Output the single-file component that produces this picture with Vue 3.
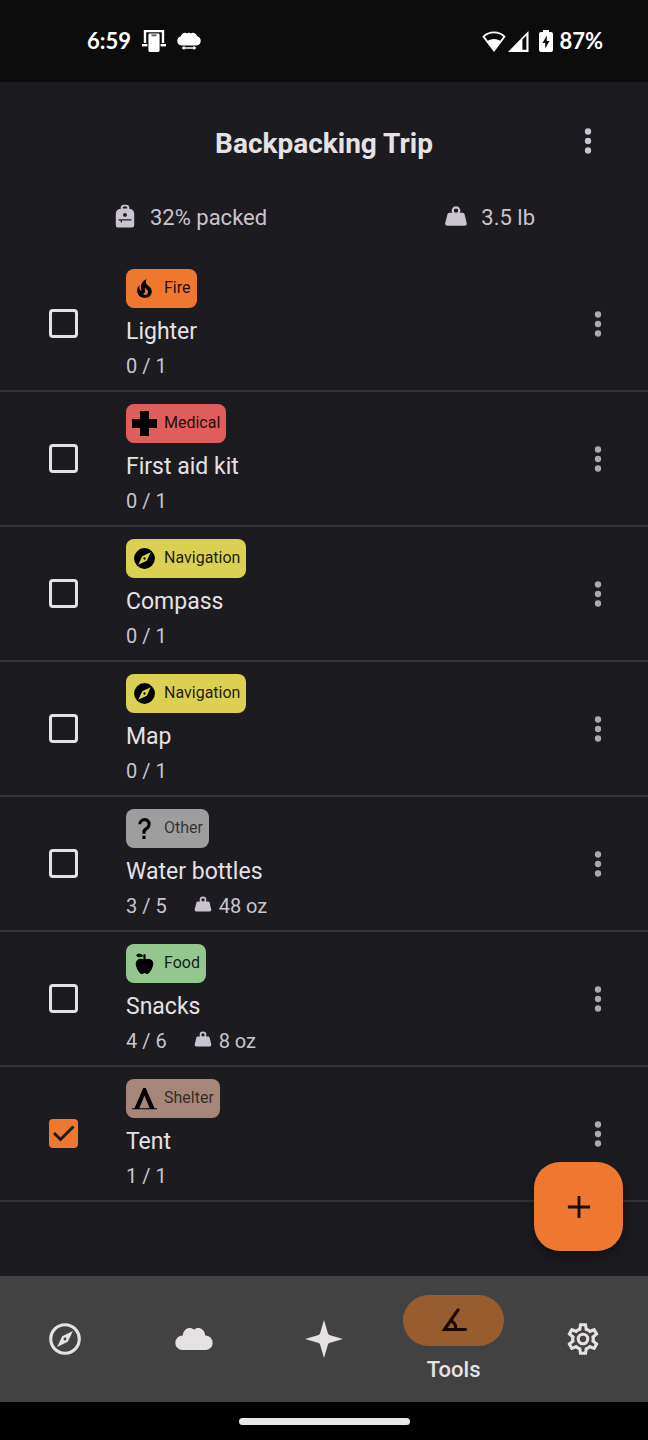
<script setup>
import { ref } from 'vue'

const paths = {
  fire: 'M17.66 11.2C17.43 10.9 17.15 10.64 16.89 10.38C16.22 9.78 15.46 9.35 14.82 8.72C13.33 7.26 13 4.85 13.95 3C13 3.23 12.17 3.75 11.46 4.32C8.87 6.4 7.85 10.07 9.07 13.22C9.11 13.32 9.15 13.42 9.15 13.55C9.15 13.77 9 13.97 8.8 14.05C8.57 14.15 8.33 14.09 8.14 13.93C8.08 13.88 8.04 13.83 8 13.76C6.87 12.33 6.69 10.28 7.45 8.64C5.78 10 4.87 12.3 5 14.47C5.06 14.97 5.12 15.47 5.29 15.97C5.43 16.57 5.7 17.17 6 17.7C7.08 19.43 8.95 20.67 10.96 20.92C13.1 21.19 15.39 20.8 17.03 19.32C18.86 17.66 19.5 15 18.56 12.72L18.43 12.46C18.22 12 17.66 11.2 17.66 11.2M14.5 17.5C14.22 17.74 13.76 18 13.4 18.1C12.28 18.5 11.16 17.94 10.5 17.28C11.69 17 12.4 16.12 12.61 15.23C12.78 14.43 12.46 13.77 12.33 13C12.21 12.26 12.23 11.63 12.5 10.94C12.69 11.32 12.89 11.7 13.13 12C13.9 13 15.11 13.44 15.37 14.8C15.41 14.94 15.43 15.08 15.43 15.23C15.46 16.05 15.1 16.95 14.5 17.5Z',
  medical: 'M7.7 0H16.3V7.7H24V16.3H16.3V24H7.7V16.3H0V7.7H7.7Z',
  compass: 'M14.19,14.19L6,18L9.81,9.81L18,6M12,2A10,10 0 0,0 2,12A10,10 0 0,0 12,22A10,10 0 0,0 22,12A10,10 0 0,0 12,2M12,10.9A1.1,1.1 0 0,0 10.9,12A1.1,1.1 0 0,0 12,13.1A1.1,1.1 0 0,0 13.1,12A1.1,1.1 0 0,0 12,10.9Z',
  help: 'M10,19H13V22H10V19M12,2C17.35,2.22 19.68,7.62 16.5,11.67C15.67,12.67 14.33,13.33 13.67,14.17C13,15 13,16 13,17H10C10,15.33 10,13.92 10.67,12.92C11.33,11.92 12.67,11.33 13.5,10.67C15.92,8.43 15.32,5.26 12,5A3,3 0 0,0 9,8H6A6,6 0 0,1 12,2Z',
  apple: 'M20,10C22,13 17,22 15,22C13,22 13,21 12,21C11,21 11,22 9,22C7,22 2,13 4,10C6,7 9,7 11,8V5C5.38,8.07 4.11,3.78 4.11,3.78C4.11,3.78 6.77,0.19 11,5V3H13V8C15,7 18,7 20,10Z',
  tent: 'M10.8 2H13.2L21.6 21.3H24V22.4H0V21.3H2.4L10.8 2M12 9.2L7 21.3H17Z',
  weight: 'M12,3A4,4 0 0,1 16,7C16,7.73 15.81,8.41 15.46,9H18C18.95,9 19.75,9.67 19.95,10.56C21.96,18.57 22,18.78 22,19A2,2 0 0,1 20,21H4A2,2 0 0,1 2,19C2,18.78 2.04,18.57 4.05,10.56C4.25,9.67 5.05,9 6,9H8.54C8.19,8.41 8,7.73 8,7A4,4 0 0,1 12,3M12,5A2,2 0 0,0 10,7A2,2 0 0,0 12,9A2,2 0 0,0 14,7A2,2 0 0,0 12,5Z',
  backpack: 'M8 6V4.5A3 3 0 0 1 11 1.5H13A3 3 0 0 1 16 4.5V5.2A5 5 0 0 1 20.5 10V20.5A2 2 0 0 1 18.5 22.5H5.5A2 2 0 0 1 3.5 20.5V10A5 5 0 0 1 8 5.2M10 5H14V4A1 1 0 0 0 13 3.2H11A1 1 0 0 0 10 4M12 9.2A1.8 1.8 0 0 0 12 12.8A1.8 1.8 0 0 0 12 9.2M6 15V16.1H8V18H9.2V16.1H18V15Z',
  dots: 'M12 4A2 2 0 1 1 12 8A2 2 0 1 1 12 4M12 10A2 2 0 1 1 12 14A2 2 0 1 1 12 10M12 16A2 2 0 1 1 12 20A2 2 0 1 1 12 16Z',
  compassOutline: 'M7,17L10.2,10.2L17,7L13.8,13.8L7,17M12,11.1A0.9,0.9 0 0,0 11.1,12A0.9,0.9 0 0,0 12,12.9A0.9,0.9 0 0,0 12.9,12A0.9,0.9 0 0,0 12,11.1M12,2A10,10 0 0,1 22,12A10,10 0 0,1 12,22A10,10 0 0,1 2,12A10,10 0 0,1 12,2M12,4A8,8 0 0,0 4,12A8,8 0 0,0 12,20A8,8 0 0,0 20,12A8,8 0 0,0 12,4Z',
  cloud: 'M4.7 19A4.6 4.6 0 0 1 4.9 9.8C5.3 5.3 9.5 3.8 12 6C14.5 3.8 18.7 5.3 19.1 9.8A4.6 4.6 0 0 1 19.3 19Z',
  star: 'M12 0L14.5 8.6Q14.8 9.2 15.4 9.5L24 12L15.4 14.5Q14.8 14.8 14.5 15.4L12 24L9.5 15.4Q9.2 14.8 8.6 14.5L0 12L8.6 9.5Q9.2 9.2 9.5 8.6Z',
  angle: 'M20,19H4.09L14.18,4.43L15.82,5.57L11.28,12.13C12.89,12.96 14,14.62 14,16.54C14,16.7 14,16.85 13.97,17H20V19M7.91,17H11.96C12,16.86 12,16.7 12,16.54C12,15.28 11.24,14.22 10.14,13.78L7.91,17Z',
  cog: 'M12,8A4,4 0 0,1 16,12A4,4 0 0,1 12,16A4,4 0 0,1 8,12A4,4 0 0,1 12,8M12,10A2,2 0 0,0 10,12A2,2 0 0,0 12,14A2,2 0 0,0 14,12A2,2 0 0,0 12,10M10,22C9.75,22 9.54,21.82 9.5,21.58L9.13,18.93C8.5,18.68 7.96,18.34 7.44,17.94L4.95,18.95C4.73,19.03 4.46,18.95 4.34,18.73L2.34,15.27C2.21,15.05 2.27,14.78 2.46,14.63L4.57,12.97L4.5,12L4.57,11L2.46,9.37C2.27,9.22 2.21,8.95 2.34,8.73L4.34,5.27C4.46,5.05 4.73,4.96 4.95,5.05L7.44,6.05C7.96,5.66 8.5,5.32 9.13,5.07L9.5,2.42C9.54,2.18 9.75,2 10,2H14C14.25,2 14.46,2.18 14.5,2.42L14.87,5.07C15.5,5.32 16.04,5.66 16.56,6.05L19.05,5.05C19.27,4.96 19.54,5.05 19.66,5.27L21.66,8.73C21.79,8.95 21.73,9.22 21.54,9.37L19.43,11L19.5,12L19.43,13L21.54,14.63C21.73,14.78 21.79,15.05 21.66,15.27L19.66,18.73C19.54,18.95 19.27,19.04 19.05,18.95L16.56,17.95C16.04,18.34 15.5,18.68 14.87,18.93L14.5,21.58C14.46,21.82 14.25,22 14,22H10M11.25,4L10.88,6.61C9.68,6.86 8.62,7.5 7.85,8.39L5.44,7.35L4.69,8.65L6.8,10.2C6.4,11.37 6.4,12.64 6.8,13.8L4.68,15.36L5.43,16.66L7.86,15.62C8.63,16.5 9.68,17.14 10.87,17.38L11.24,20H12.76L13.13,17.39C14.32,17.14 15.37,16.5 16.14,15.62L18.57,16.66L19.32,15.36L17.2,13.81C17.6,12.64 17.6,11.37 17.2,10.2L19.31,8.65L18.56,7.35L16.15,8.39C15.38,7.5 14.32,6.86 13.12,6.62L12.75,4H11.25Z'
}

const items = ref([
  { name: 'Lighter', category: 'Fire', icon: 'fire', count: '0 / 1', packed: false },
  { name: 'First aid kit', category: 'Medical', icon: 'medical', count: '0 / 1', packed: false },
  { name: 'Compass', category: 'Navigation', icon: 'compass', count: '0 / 1', packed: false },
  { name: 'Map', category: 'Navigation', icon: 'compass', count: '0 / 1', packed: false },
  { name: 'Water bottles', category: 'Other', icon: 'help', count: '3 / 5', weight: '48 oz', packed: false },
  { name: 'Snacks', category: 'Food', icon: 'apple', count: '4 / 6', weight: '8 oz', packed: false },
  { name: 'Tent', category: 'Shelter', icon: 'tent', count: '1 / 1', packed: true }
])

const tabs = [
  { name: 'Navigation', icon: 'compassOutline' },
  { name: 'Weather', icon: 'cloud' },
  { name: 'Astronomy', icon: 'star' },
  { name: 'Tools', icon: 'angle', active: true },
  { name: 'Settings', icon: 'cog' }
]
</script>

<template>
  <div class="screen">
    <div class="status">
      <div class="status-group">
        <span class="clock">6:59</span>
        <svg width="24" height="22" viewBox="0 0 24 22">
          <path d="M3 13V1H21V13" fill="none" stroke="#fff" stroke-width="2.4" />
          <path d="M0 14H24V16.4H0Z" fill="#fff" />
          <path d="M5.4 3H18.6V22H5.4Z" fill="#0c0c0c" />
          <rect x="6.4" y="3.6" width="11.2" height="18.4" rx="1.4" fill="#fff" />
          <path d="M9 4.4H15L14 6.2H10Z" fill="#0c0c0c" opacity=".7" />
        </svg>
        <svg width="24" height="18" viewBox="0 0 24 18">
          <path d="M4.5 13.4A4.6 4.6 0 0 1 3.6 4.4C5 1 8 -.4 10.4 1.6L12 .6L13.600 1.6C16 -.4 19 1 20.400 4.4A4.600 4.600 0 0 1 19.500 13.4Z" fill="#fff" />
          <path d="M4.500 16L7.500 13.800V15.200H16.500V13.800L19.500 16L16.500 18V16.700H7.500V18Z" fill="#fff" />
        </svg>
      </div>
      <div class="status-group right">
        <svg width="24" height="21" viewBox="0 0 24 21">
          <path d="M12 1.3C7.8 1.3 4 3 1.5 5.6L12 19.5L22.5 5.6C20 3 16.2 1.3 12 1.3Z" fill="none" stroke="#fff" stroke-width="1.8" />
          <path d="M12 20L4.8 10.6C8.5 7 15.5 7 19.2 10.6Z" fill="#fff" />
        </svg>
        <svg width="21" height="21" viewBox="0 0 21 21">
          <path d="M0 21L20.5 0V21ZM14.4 8.6V18.8H18.4V4.6Z" fill="#fff" fill-rule="evenodd" />
        </svg>
        <svg class="battery" width="14" height="22" viewBox="0 0 14 22">
          <path d="M4 0H10V2H12A2 2 0 0 1 14 4V20A2 2 0 0 1 12 22H2A2 2 0 0 1 0 20V4A2 2 0 0 1 2 2H4Z" fill="#fff" />
          <path d="M7.8 5.5V11H10.5L6.2 18.5V13H3.5Z" fill="#0c0c0c" />
        </svg>
        <span class="clock">87%</span>
      </div>
    </div>

    <header class="header">
      <div class="title-row">
        <h1>Backpacking Trip</h1>
        <button class="icon-button" type="button" aria-label="List options">
          <svg class="icon" viewBox="0 0 24 24"><path :d="paths.dots" /></svg>
        </button>
      </div>
      <div class="stats">
        <div class="stat">
          <svg class="stat-icon" viewBox="0 0 24 24"><path fill-rule="evenodd" :d="paths.backpack" /></svg>
          <span>32% packed</span>
        </div>
        <div class="stat">
          <svg class="stat-icon" viewBox="0 0 24 24"><path :d="paths.weight" /></svg>
          <span>3.5 lb</span>
        </div>
      </div>
    </header>

    <main class="content">
      <ul class="list">
        <li v-for="(item, i) in items" :key="item.name" class="row">
          <span class="check">
            <input :id="'item-' + i" v-model="item.packed" type="checkbox" />
            <svg v-if="item.packed" class="tick" viewBox="0 0 29 29"><path d="M5 14L11.5 20.5L24.5 7.5" /></svg>
          </span>
          <div class="details">
            <span class="chip" :class="item.category.toLowerCase()">
              <svg class="chip-icon" viewBox="0 0 24 24"><path fill-rule="evenodd" :d="paths[item.icon]" /></svg>
              <span>{{ item.category }}</span>
            </span>
            <label class="name" :for="'item-' + i">{{ item.name }}</label>
            <div class="amount">
              <span>{{ item.count }}</span>
              <span v-if="item.weight" class="weight">
                <svg class="weight-icon" viewBox="0 0 24 24"><path :d="paths.weight" /></svg>
                <span>{{ item.weight }}</span>
              </span>
            </div>
          </div>
          <button class="icon-button dim" type="button" :aria-label="item.name + ' options'">
            <svg class="icon" viewBox="0 0 24 24"><path :d="paths.dots" /></svg>
          </button>
        </li>
      </ul>
      <button class="fab" type="button" aria-label="Add item">
        <svg class="icon" viewBox="0 0 24 24"><path d="M5 11.1H11.1V5H12.9V11.1H19V12.9H12.9V19H11.1V12.9H5Z" /></svg>
      </button>
    </main>

    <nav class="tabs">
      <a v-for="tab in tabs" :key="tab.name" href="#" class="tab" :class="{ active: tab.active }" :aria-label="tab.name">
        <span class="tab-icon">
          <svg class="icon" viewBox="0 0 24 24"><path fill-rule="evenodd" :d="paths[tab.icon]" /></svg>
        </span>
        <span v-if="tab.active" class="tab-label">{{ tab.name }}</span>
      </a>
    </nav>
    <div class="gesture"><span class="handle"></span></div>
  </div>
</template>

<style>
body {
  margin: 0;
  background: #1c1b1f;
}
</style>

<style scoped>
.screen {
  display: flex;
  flex-direction: column;
  min-height: 100vh;
  background: #1c1b1f;
  color: #e6e1e5;
  font-family: Roboto, "Noto Sans", sans-serif;
}
svg {
  display: block;
  flex: none;
}
.status {
  display: flex;
  align-items: center;
  justify-content: space-between;
  height: 82px;
  padding: 0 45px 0 87px;
  background: #0c0c0c;
  color: #fff;
}
.status-group {
  display: flex;
  align-items: center;
  gap: 11px;
}
.status-group.right {
  gap: 2px;
}
.battery {
  margin: 0 4px 0 8px;
}
.clock {
  font: 700 22px/28px Lato, Roboto, sans-serif;
}
.header {
  padding: 40px 0 24px;
}
.title-row {
  display: grid;
  grid-template-columns: 1fr auto 1fr;
  align-items: start;
  padding: 0 41px;
}
h1 {
  grid-column: 2;
  margin: 0;
  font-size: 28px;
  line-height: 44px;
  font-weight: 700;
}
.icon-button {
  justify-self: end;
  flex: none;
  width: 38px;
  height: 38px;
  padding: 0;
  border: 0;
  background: none;
  color: #cac4d0;
}
.icon-button.dim {
  color: #aca7b1;
}
.icon {
  width: 38px;
  height: 38px;
  fill: currentColor;
}
.stats {
  display: flex;
  justify-content: space-between;
  padding: 0 113px 0 112px;
  margin-top: 37px;
}
.stat {
  display: flex;
  align-items: flex-start;
  gap: 12px;
  color: #cac4d0;
  font-size: 22px;
  line-height: 30px;
}
.stat-icon {
  width: 26px;
  height: 26px;
  fill: currentColor;
}
.content {
  position: relative;
  flex: 1;
}
.list {
  margin: 0;
  padding: 0;
  list-style: none;
}
.row {
  display: flex;
  align-items: center;
  padding: 12px 31px 12px 49px;
  border-bottom: 2px solid #343337;
}
.check {
  display: grid;
  flex: none;
  margin-right: 48px;
}
.check input,
.tick {
  grid-area: 1 / 1;
  width: 29px;
  height: 29px;
}
.check input {
  appearance: none;
  box-sizing: border-box;
  margin: 0;
  border: 3px solid #e6e1e5;
  border-radius: 4px;
}
.check input:checked {
  border-color: #ef7830;
  background: #ef7830;
}
.tick {
  fill: none;
  stroke: #1c1b1f;
  stroke-width: 3;
  pointer-events: none;
}
.details {
  display: flex;
  flex: 1;
  flex-direction: column;
  align-items: flex-start;
  gap: 6px;
}
.chip {
  display: flex;
  align-items: flex-start;
  gap: 7px;
  margin-bottom: 2px;
  padding: 7px 6px;
  border-radius: 8px;
  color: rgba(0, 0, 0, 0.87);
  font-size: 16px;
  line-height: 23px;
}
.chip-icon {
  width: 25px;
  height: 25px;
  fill: #000;
}
.fire { background: #ef7830; }
.medical { background: #df5d5a; }
.navigation { background: #dbd052; }
.other { background: #9e9e9e; }
.food { background: #93c78d; }
.shelter { background: #a58679; }
.chip.other,
.chip.shelter {
  color: rgba(0, 0, 0, 0.7);
}
.name {
  font-size: 23px;
  line-height: 32px;
}
.amount {
  display: flex;
  gap: 26px;
  color: #cac4d0;
  font-size: 20px;
  line-height: 24px;
}
.weight {
  display: flex;
  align-items: flex-start;
  gap: 6px;
}
.weight-icon {
  width: 20px;
  height: 20px;
  fill: currentColor;
}
.fab {
  position: absolute;
  right: 25px;
  bottom: 25px;
  display: grid;
  place-items: center;
  width: 89px;
  height: 89px;
  padding: 0;
  border: 0;
  border-radius: 26px;
  background: #ef7830;
  color: #1c0c04;
  box-shadow: 0 5px 12px rgba(0, 0, 0, 0.4);
}
.tabs {
  display: flex;
  height: 126px;
  background: #424242;
}
.tab {
  display: flex;
  flex: 1;
  flex-direction: column;
  align-items: center;
  justify-content: center;
  gap: 10px;
  color: #e6e1e5;
  text-decoration: none;
}
.tab.active .tab-icon {
  display: grid;
  place-items: center;
  width: 101px;
  height: 51px;
  border-radius: 26px;
  background: #985d2f;
  color: #1c0802;
}
.tab-label {
  font-size: 22px;
  line-height: 28px;
  font-weight: 500;
}
.gesture {
  display: grid;
  place-items: center;
  height: 38px;
  background: #000;
}
.handle {
  width: 171px;
  height: 7px;
  border-radius: 4px;
  background: #e8e8e8;
}
</style>
